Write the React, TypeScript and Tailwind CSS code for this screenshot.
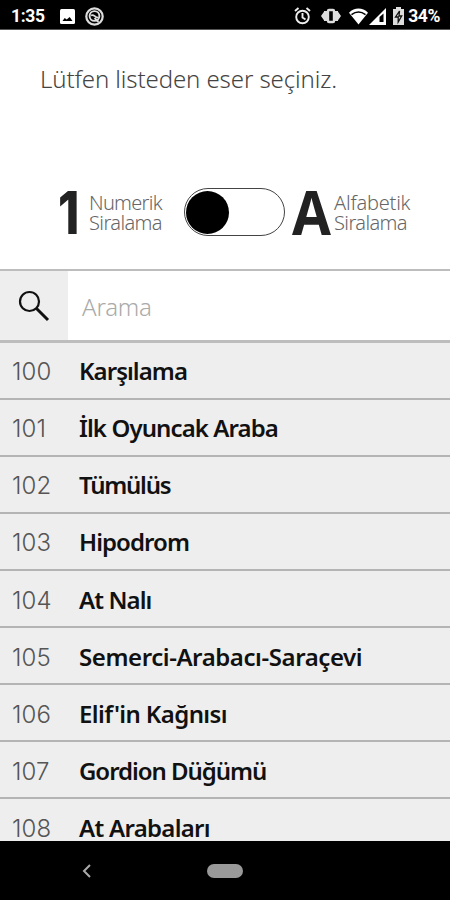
import React from "react";

const items = [
  { no: "100", title: "Karşılama", spacing: "tracking-[-0.95px]" },
  { no: "101", title: "İlk Oyuncak Araba", spacing: "tracking-[-0.9px]" },
  { no: "102", title: "Tümülüs", spacing: "tracking-[-1.25px]" },
  { no: "103", title: "Hipodrom", spacing: "tracking-[-0.95px]" },
  { no: "104", title: "At Nalı", spacing: "tracking-[-0.9px]" },
  { no: "105", title: "Semerci-Arabacı-Saraçevi", spacing: "tracking-[-0.42px]" },
  { no: "106", title: "Elif'in Kağnısı", spacing: "tracking-[-0.6px]" },
  { no: "107", title: "Gordion Düğümü", spacing: "tracking-[-1.05px]" },
  { no: "108", title: "At Arabaları", spacing: "tracking-[-0.7px]" },
];

function StatusBar() {
  return (
    <header className="flex h-[30px] shrink-0 items-center border-b border-[#555] bg-black pl-[11px] pr-[10px] pt-[3px] font-[Roboto,sans-serif] text-[17.5px] font-bold leading-none text-white">
      <span className="w-[49px] pt-px tracking-[-0.3px]">1:35</span>
      <svg width="15" height="15" viewBox="0 0 15 15" className="mr-[10px]">
        <rect width="15" height="15" rx="1.5" fill="#fff" />
        <path d="M2.500 12l2.200-3 2 1.500 3-2.500L12.500 12z" fill="#000" />
      </svg>
      <svg width="19" height="19" viewBox="0 0 19 19" fill="none" stroke="#ddd">
        <circle cx="9.500" cy="9.500" r="8.200" strokeWidth="2.200" />
        <circle cx="9.500" cy="9" r="4.900" strokeWidth="1.900" />
        <path d="M6 8.500c3-2 4 2.500 7.500 2M9.500 11l4 4" strokeWidth="1.800" />
      </svg>
      <div className="flex-1" />
      <svg width="17" height="18" viewBox="0 0 17 18" fill="none" stroke="#eee" strokeWidth="1.900" className="mr-[10px]">
        <circle cx="8.500" cy="10" r="6.300" />
        <path d="M1 4l3.500-3M16 4l-3.500-3M8.500 6v4.500l3 2" />
      </svg>
      <svg width="20" height="16" viewBox="0 0 20 16" className="mr-[8px]" fill="#ddd">
        <path d="M0 8l3.500-5v10zM20 8l-3.500-5v10z" />
        <path d="M3 3h3v10H3zM14 3h3v10h-3z" />
        <rect x="7" y="2" width="6" height="12" rx="1" fill="#000" stroke="#ddd" strokeWidth="2.400" />
      </svg>
      <svg width="19" height="17" viewBox="0 0 19 17" className="mr-[1px]">
        <path d="M0 4.800C5.500-.8 13.500-.8 19 4.800L9.500 16.500z" fill="#fff" />
        <path d="M2.500 6.600C7 3.200 12 3.200 16.500 6.600" fill="none" stroke="#000" strokeWidth="1.500" />
      </svg>
      <svg width="17" height="17" viewBox="0 0 17 17" className="mr-[7px]">
        <path d="M0 17L17 0v17z" fill="#fff" />
        <path d="M10.500 14V9l4-3.500V14z" fill="#000" />
      </svg>
      <svg width="11" height="18" viewBox="0 0 11 18" className="mr-[4px]">
        <path d="M3 0h5v2h3v16H0V2h3z" fill="#ddd" />
        <path d="M6.500 4L2.500 10h2.700v5L8.700 9H6z" fill="none" stroke="#111" strokeWidth="1.300" />
      </svg>
      <span className="pt-px tracking-[-0.4px]">34%</span>
    </header>
  );
}

function SortSwitch() {
  return (
    <div className="flex h-[48px] w-[101px] shrink-0 items-center rounded-full border-[1.5px] border-[#444] bg-white">
      <span className="ml-[1px] h-[43px] w-[43px] rounded-full bg-black" />
    </div>
  );
}

export default function App() {
  return (
    <div className="flex h-[900px] w-[450px] flex-col overflow-hidden bg-white font-['Noto_Sans',sans-serif]">
      <StatusBar />
      <p className="mt-[31px] h-[36px] whitespace-nowrap pl-[40px] text-[24px] font-light leading-[36px] tracking-[-0.1px] text-[#444]">
        Lütfen listeden eser seçiniz.
      </p>
      <section className="mt-[91px] flex h-[48px] items-center pl-[58px]">
        <div className="w-[31px] pt-[5px]">
          <span className="inline-block origin-left scale-x-[0.82] font-[Inter,sans-serif] text-[59px] font-extrabold leading-[48px] text-[#222]">1</span>
        </div>
        <div className="w-[95px] whitespace-nowrap pt-[2px] text-[20px] font-light leading-[20px] text-[#666]">
          <div className="tracking-[-0.7px]">Numerik</div>
          <div className="tracking-[-0.6px]">Siralama</div>
        </div>
        <SortSwitch />
        <div className="ml-[7px] w-[42px] pt-[4px]">
          <span className="inline-block origin-left scale-x-[0.94] font-['Open_Sans',sans-serif] text-[60px] font-bold leading-[48px] text-[#222]">A</span>
        </div>
        <div className="whitespace-nowrap pt-[2px] text-[20px] font-light leading-[20px] text-[#666]">
          <div className="tracking-[-0.2px]">Alfabetik</div>
          <div className="tracking-[-0.6px]">Siralama</div>
        </div>
      </section>
      <div className="mt-[33px] flex h-[74px] shrink-0 border-b-[3px] border-t-2 border-[#bdbdbd]">
        <div className="flex w-[68px] items-center justify-center bg-[#eee]">
          <svg width="32" height="32" viewBox="0 0 32 32" fill="none" stroke="#111">
            <circle cx="11.500" cy="11.500" r="9.500" strokeWidth="2.200" />
            <path d="M18.500 18.500L30 30" strokeWidth="3" />
          </svg>
        </div>
        <div className="flex items-center pl-[14px] pt-[2px] text-[24px] font-light tracking-[-0.2px] text-[#aaa]">Arama</div>
      </div>
      <main className="min-h-0 flex-1 overflow-hidden bg-[#eee]">
        {items.map((item) => (
          <div key={item.no} className="flex h-[57.1px] items-center whitespace-nowrap border-b-2 border-[#b4b4b4] pl-[12px] pt-[2px] text-[24px] first:h-[56.7px]">
            <span className="w-[67px] pt-[2px] font-[Inter,sans-serif] font-light tracking-[0.1px] text-[#555]">{item.no}</span>
            <span className={`font-semibold text-[#111] ${item.spacing}`}>{item.title}</span>
          </div>
        ))}
      </main>
      <nav className="flex h-[59px] shrink-0 items-center bg-black pl-[82px]">
        <svg width="9" height="14" viewBox="0 0 9 14" fill="none" stroke="#aaa" strokeWidth="2">
          <path d="M8 1L2 7l6 6" />
        </svg>
        <span className="ml-[116px] h-[14px] w-[36px] rounded-full bg-[#999]" />
      </nav>
    </div>
  );
}
